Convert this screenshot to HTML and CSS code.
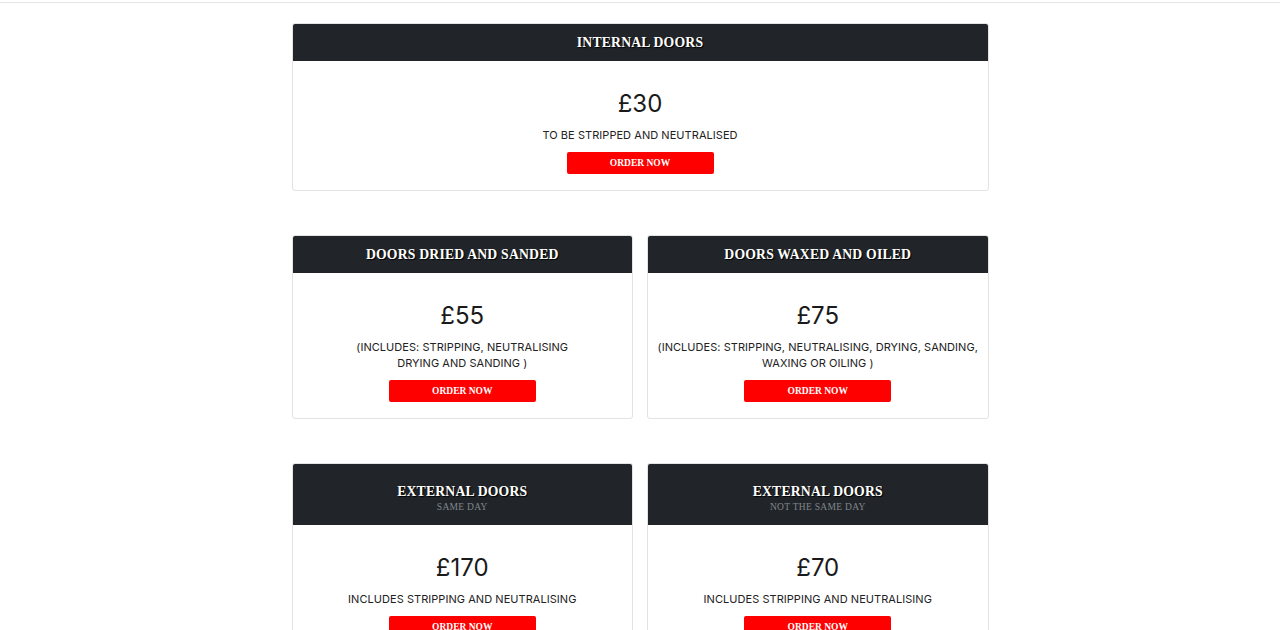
FILE: index.html
```html
<!DOCTYPE html>
<html>
<head>
<meta charset="utf-8">
<link rel="stylesheet" href="styles.css">
</head>
<body>
<div class="topbar"></div>
<main class="container">
  <section class="row single">
    <div class="card">
      <div class="card-head"><h3>INTERNAL DOORS</h3></div>
      <div class="card-body">
        <div class="price">£30</div>
        <p class="desc">TO BE STRIPPED AND NEUTRALISED</p>
        <a class="btn">ORDER NOW</a>
      </div>
    </div>
  </section>
  <section class="row double">
    <div class="card">
      <div class="card-head"><h3>DOORS DRIED AND SANDED</h3></div>
      <div class="card-body">
        <div class="price">£55</div>
        <p class="desc">(INCLUDES: STRIPPING, NEUTRALISING<br>DRYING AND SANDING )</p>
        <a class="btn">ORDER NOW</a>
      </div>
    </div>
    <div class="card">
      <div class="card-head"><h3>DOORS WAXED AND OILED</h3></div>
      <div class="card-body">
        <div class="price">£75</div>
        <p class="desc">(INCLUDES: STRIPPING, NEUTRALISING, DRYING, SANDING,<br>WAXING OR OILING )</p>
        <a class="btn">ORDER NOW</a>
      </div>
    </div>
  </section>
  <section class="row double">
    <div class="card">
      <div class="card-head tall"><h3>EXTERNAL DOORS</h3><div class="sub">SAME DAY</div></div>
      <div class="card-body">
        <div class="price">£170</div>
        <p class="desc">INCLUDES STRIPPING AND NEUTRALISING</p>
        <a class="btn">ORDER NOW</a>
      </div>
    </div>
    <div class="card">
      <div class="card-head tall"><h3>EXTERNAL DOORS</h3><div class="sub">NOT THE SAME DAY</div></div>
      <div class="card-body">
        <div class="price">£70</div>
        <p class="desc">INCLUDES STRIPPING AND NEUTRALISING</p>
        <a class="btn">ORDER NOW</a>
      </div>
    </div>
  </section>
</main>
</body>
</html>
```
FILE: styles.css
```css
* { box-sizing: border-box; }
html, body { margin: 0; padding: 0; background: #fff; }
body { font-family: Inter, "Open Sans", sans-serif; color: #212529; }
.topbar { height: 3px; border-bottom: 1px solid #e6e6e6; }
.container { width: 697px; margin: 20px auto 0; }
.row { margin-bottom: 44px; }
.row.double { display: grid; grid-template-columns: 1fr 1fr; column-gap: 14px; }
.card { border: 1px solid #e3e3e3; border-radius: 3px; background: #fff; overflow: hidden; }
.card-head { background: #212529; text-align: center; padding: 10px 0; }
.card-head.tall { padding: 19px 0 11px; }
.card-head h3 {
  margin: 0; font-family: "Liberation Serif", serif; font-weight: bold;
  font-size: 13.7px; line-height: 17px; color: #fff; letter-spacing: 0.2px;
  text-shadow: 1px 1px 1px #000;
}
.card-head .sub {
  font-family: "Liberation Serif", serif; font-size: 9.5px; line-height: 14px;
  color: #80868d; letter-spacing: 0.3px;
}
.card-body { text-align: center; padding: 28px 0 16px; }
.price { font-size: 24px; line-height: 30px; color: #1a1a1a; font-weight: 400; }
.desc { margin: 8px 0 0; font-size: 11px; line-height: 16px; letter-spacing: 0.05px; color: #222; white-space: nowrap; }
.btn {
  display: inline-block; margin-top: 9px; width: 147px; height: 22px; line-height: 22px;
  background: #ff0000; color: #fff; border-radius: 2px;
  font-family: "Liberation Serif", serif; font-weight: bold; font-size: 9.5px; letter-spacing: 0;
}
```
